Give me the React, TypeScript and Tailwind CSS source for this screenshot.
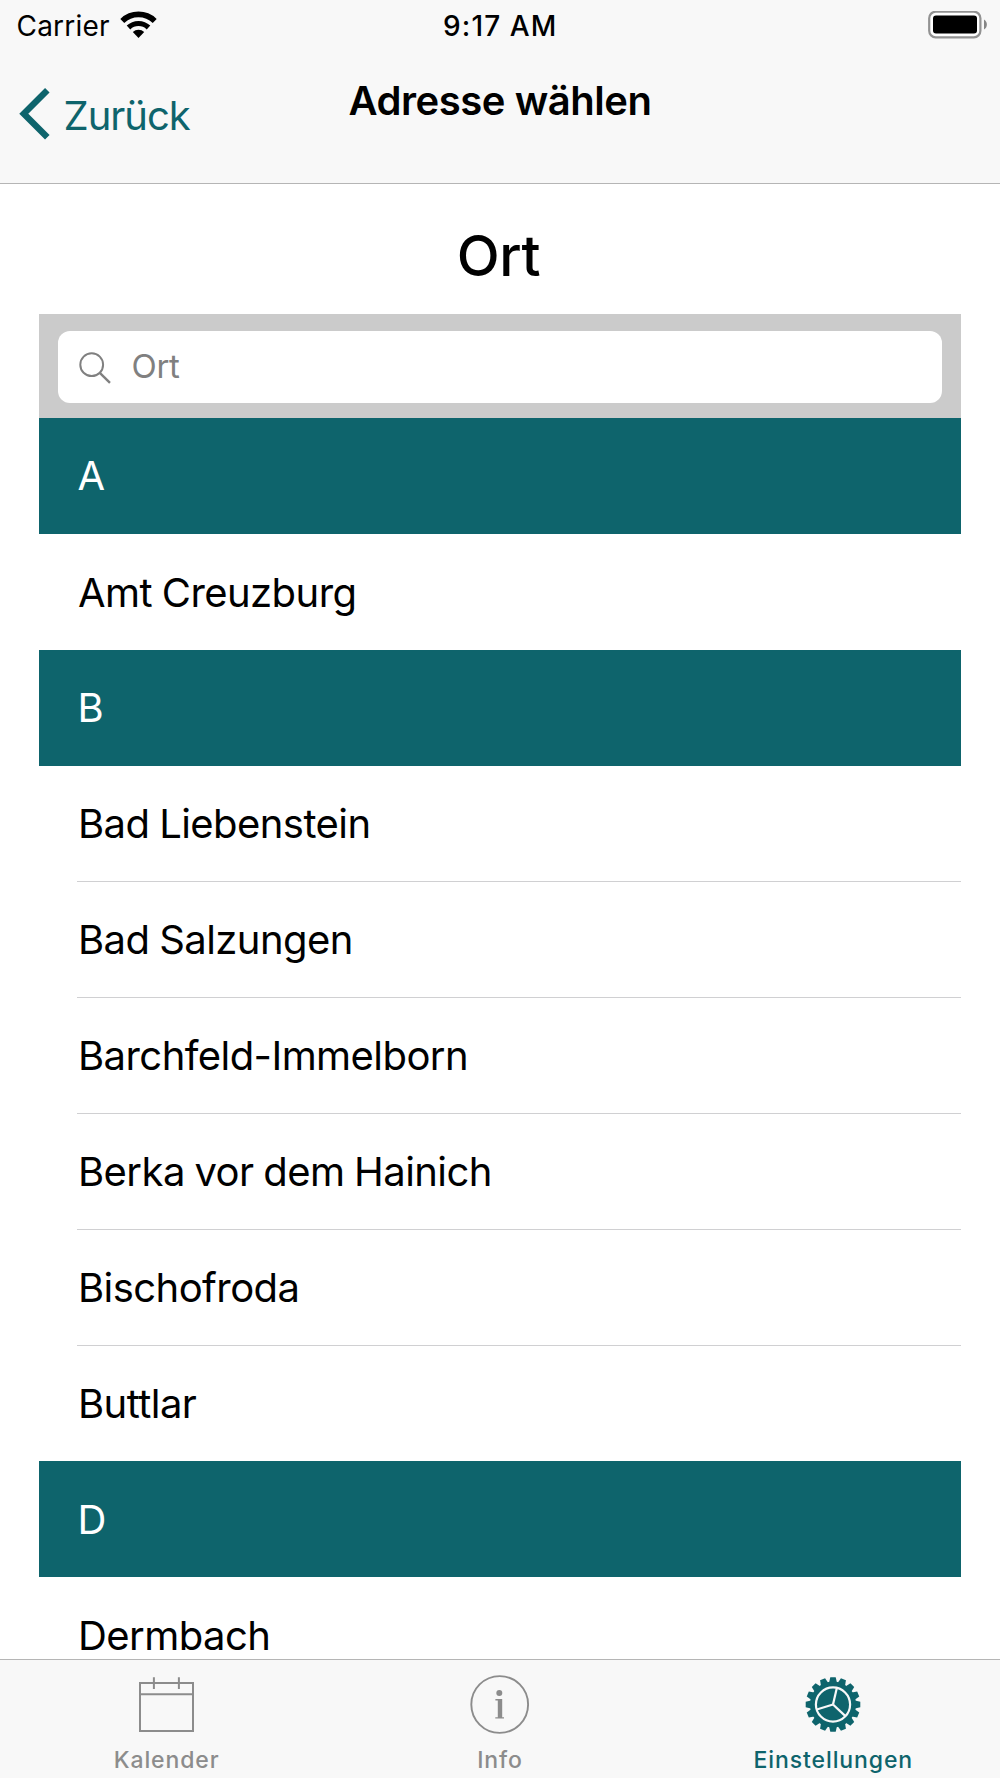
import type { ReactNode } from 'react';

const sections = [
  { letter: 'A', places: ['Amt Creuzburg'] },
  {
    letter: 'B',
    places: [
      'Bad Liebenstein',
      'Bad Salzungen',
      'Barchfeld-Immelborn',
      'Berka vor dem Hainich',
      'Bischofroda',
      'Buttlar',
    ],
  },
  { letter: 'D', places: ['Dermbach'] },
];

const teeth = Array.from({ length: 16 }, (_, i) => i * 22.5);
const spokes = [13, 133, 253];

function WifiIcon() {
  return (
    <svg width="37" height="28" viewBox="0 0 37 28" fill="none" stroke="#000">
      <path d="M2.3 9.95A23.5 23.5 0 0 1 34.7 9.95" strokeWidth="5.7" />
      <path d="M8.5 16.5A14.5 14.5 0 0 1 28.5 16.5" strokeWidth="5.2" />
      <path d="M18.5 27L12.8 21.1A8.2 8.2 0 0 1 24.2 21.1Z" fill="#000" stroke="none" />
    </svg>
  );
}

function BatteryIcon() {
  return (
    <svg width="60" height="28" viewBox="0 0 60 28">
      <rect x="1.2" y="0.7" width="51.2" height="25.6" rx="6.5" fill="#fff" stroke="#929292" strokeWidth="2.2" />
      <rect x="5" y="4.5" width="44" height="18" rx="3" fill="#000" />
      <path d="M56 8.5C59.8 10.5 59.8 16.5 56 18.5Z" fill="#858585" />
    </svg>
  );
}

function SearchIcon() {
  return (
    <svg width="34" height="34" viewBox="0 0 34 34" fill="none" stroke="#808080" strokeWidth="2">
      <circle cx="13.7" cy="14.7" r="11.4" />
      <path d="M21.8 22.8L32 32.8" strokeWidth="2.4" />
    </svg>
  );
}

function CalendarIcon() {
  return (
    <svg width="60" height="60" viewBox="0 0 60 60" fill="none" stroke="#8c8c8c" strokeWidth="2">
      <path d="M3 9H56V57H3ZM3 20.2H56" />
      <path d="M16.9 3.3V15M41.9 3.3V15" />
    </svg>
  );
}

function InfoIcon() {
  return (
    <svg width="60" height="60" viewBox="0 0 60 60" fill="#8c8c8c">
      <circle cx="29.7" cy="30.5" r="28.4" fill="none" stroke="#8c8c8c" strokeWidth="1.9" />
      <circle cx="29.3" cy="19" r="3" />
      <path d="M25.4 25H32.2V43.2H34V44.6H25.3V43.2H27.8V26.4H25.4Z" />
    </svg>
  );
}

function GearIcon() {
  return (
    <svg width="60" height="60" viewBox="-30 -30.5 60 60">
      <g fill="#0e646c">
        <circle r="23" />
        {teeth.map((deg) => (
          <path key={deg} d="M-3.9 -22L-2.7 -27.3H2.7L3.9 -22Z" transform={`rotate(${deg})`} />
        ))}
      </g>
      <g fill="none" stroke="#f8f8f8" strokeWidth="2.2">
        <circle r="17.1" />
        {spokes.map((deg) => (
          <path key={deg} d="M0 0V-17" transform={`rotate(${deg})`} />
        ))}
      </g>
    </svg>
  );
}

function Tab({ icon, label, active }: { icon: ReactNode; label: string; active?: boolean }) {
  return (
    <div className={`flex flex-col items-center pt-[14px] ${active ? 'text-[#0e646c]' : 'text-[#8c8c8c]'}`}>
      {icon}
      <span className="mt-[12px] text-[23px] leading-[28px] font-medium tracking-[0.9px]">{label}</span>
    </div>
  );
}

export default function App() {
  return (
    <div className="flex h-[1778px] w-[1000px] flex-col overflow-hidden bg-white font-['Inter','Liberation_Sans',sans-serif] whitespace-nowrap text-black">
      <header className="h-[184px] shrink-0 border-b border-[#b5b5b5] bg-[#f8f8f8]">
        <div className="grid h-[50px] grid-cols-3 items-center pr-[12px] pl-[16.5px] text-[28px]">
          <div className="flex items-center gap-[10px] leading-none">
            <span className="pt-[2px] tracking-[0.2px]">Carrier</span>
            <WifiIcon />
          </div>
          <span className="pt-px pr-[4px] text-center font-medium tracking-[1.1px]">9:17 AM</span>
          <div className="flex justify-end">
            <BatteryIcon />
          </div>
        </div>
        <div className="grid h-[131px] grid-cols-[1fr_auto_1fr]">
          <div className="flex items-center pl-[19px] text-[40px] text-[#0e646c]">
            <svg width="31" height="52" viewBox="0 0 31 52" className="-mt-[3px]" fill="none" stroke="currentColor" strokeWidth="6.4">
              <path d="M28.3 2.3L4.8 25.8L28.3 49.3" />
            </svg>
            <span className="ml-[13.5px] tracking-[-1px]">Zurück</span>
          </div>
          <h1 className="mt-[27px] text-[40px] leading-[48px] font-semibold tracking-[-0.45px]">Adresse wählen</h1>
        </div>
      </header>

      <main className="min-h-0 flex-1 overflow-hidden px-[39px]">
        <h2 className="flex h-[130px] items-center justify-center pt-[14px] pr-[3px] text-[56px] font-medium tracking-[-0.3px]">
          Ort
        </h2>
        <div className="h-[104px] bg-[#cbcbcb] px-[19px] pt-[17px]">
          <div className="flex h-[72px] items-center rounded-[12px] bg-white pl-[20px]">
            <SearchIcon />
            <span className="ml-[19.5px] text-[33px] tracking-[-0.3px] text-[#808080]">Ort</span>
          </div>
        </div>
        {sections.map(({ letter, places }) => (
          <section key={letter} className="text-[40px] tracking-[-0.56px] [word-spacing:-1px]">
            <h3 className="flex h-[115.95px] items-center bg-[#0e646c] pt-px pl-[38.5px] text-white">{letter}</h3>
            <ul className="pl-[38px]">
              {places.map((place) => (
                <li
                  key={place}
                  className="flex h-[115.95px] items-center border-b border-[#d0d0d2] pt-[2px] pl-px last:border-b-0"
                >
                  {place}
                </li>
              ))}
            </ul>
          </section>
        ))}
      </main>

      <nav className="grid h-[119px] shrink-0 grid-cols-3 border-t border-[#b5b5b5] bg-[#f8f8f8]">
        <Tab icon={<CalendarIcon />} label="Kalender" />
        <Tab icon={<InfoIcon />} label="Info" />
        <Tab icon={<GearIcon />} label="Einstellungen" active />
      </nav>
    </div>
  );
}
